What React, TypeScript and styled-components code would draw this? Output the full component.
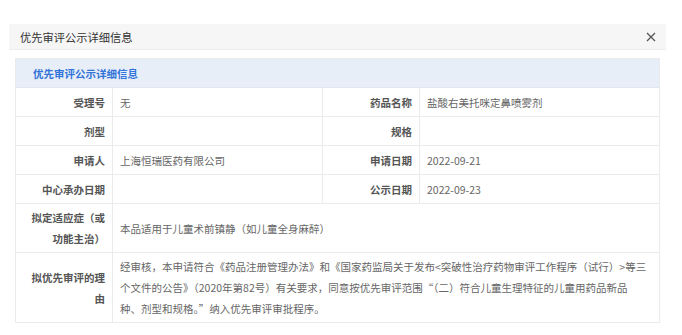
import React from 'react';
import styled, { createGlobalStyle } from 'styled-components';

const GlobalStyle = createGlobalStyle`
  html, body {
    margin: 0;
    padding: 0;
    background: #fff;
    font-family: "Noto Sans CJK SC", "Liberation Sans", sans-serif;
  }
`;

const Dialog = styled.div`
  width: 657px;
  margin: 24px 0 0 9px;
`;

const Header = styled.div`
  height: 26px;
  display: flex;
  align-items: center;
  justify-content: space-between;
  padding: 0 9px 0 11px;
  background: #f6f6f6;
  border-bottom: 1px solid #eeeeee;
  box-sizing: border-box;
`;

const HeaderTitle = styled.span`
  font-size: 11.25px;
  color: #333;
`;

const CloseButton = styled.button`
  width: 12px;
  height: 12px;
  padding: 0;
  border: none;
  background: none;
  display: flex;
  align-items: center;
  justify-content: center;
  cursor: pointer;
`;

const Body = styled.div`
  padding: 8px 7px 0 6px;
`;

const Table = styled.table`
  width: 644px;
  border-collapse: collapse;
  table-layout: fixed;
  font-size: 10.5px;
  line-height: 21px;
  border: 1px solid #ebebeb;
`;

const TitleCell = styled.th`
  height: 28px;
  padding: 0 0 0 17px;
  text-align: left;
  background: #e8eef8;
  color: #3274d9;
  font-weight: bold;
  border-bottom: 1px solid #e2e6ee;
`;

const Label = styled.td`
  padding: 3px 7px 3px 8px;
  text-align: right;
  vertical-align: middle;
  color: #555;
  font-weight: bold;
  border: 1px solid #ebebeb;
  height: 22px;
`;

const Value = styled.td<{ $wide?: boolean }>`
  padding: ${p => (p.$wide ? '3px 12px 3px 7px' : '3px 7px')};
  text-align: left;
  vertical-align: middle;
  color: #666;
  border: 1px solid #ebebeb;
`;

type Pair = [string, string];

const pairs: [Pair, Pair][] = [
  [['受理号', '无'], ['药品名称', '盐酸右美托咪定鼻喷雾剂']],
  [['剂型', ''], ['规格', '']],
  [['申请人', '上海恒瑞医药有限公司'], ['申请日期', '2022-09-21']],
  [['中心承办日期', ''], ['公示日期', '2022-09-23']],
];

const wide: Pair[] = [
  ['拟定适应症（或功能主治）', '本品适用于儿童术前镇静（如儿童全身麻醉）'],
  [
    '拟优先审评的理由',
    '经审核，本申请符合《药品注册管理办法》和《国家药监局关于发布<突破性治疗药物审评工作程序（试行）>等三个文件的公告》（2020年第82号）有关要求，同意按优先审评范围“（二）符合儿童生理特征的儿童用药品新品种、剂型和规格。”纳入优先审评审批程序。',
  ],
];

export default function App() {
  return (
    <>
      <GlobalStyle />
      <Dialog>
        <Header>
          <HeaderTitle>优先审评公示详细信息</HeaderTitle>
          <CloseButton aria-label="关闭">
            <svg width="10" height="10" viewBox="0 0 10 10">
              <path d="M1 1 L9 9 M9 1 L1 9" stroke="#555" strokeWidth="1.3" />
            </svg>
          </CloseButton>
        </Header>
        <Body>
          <Table>
            <colgroup>
              <col style={{ width: 97 }} />
              <col style={{ width: 210 }} />
              <col style={{ width: 97 }} />
              <col style={{ width: 240 }} />
            </colgroup>
            <thead>
              <tr>
                <TitleCell colSpan={4}>优先审评公示详细信息</TitleCell>
              </tr>
            </thead>
            <tbody>
              {pairs.map(([a, b]) => (
                <tr key={a[0]}>
                  <Label>{a[0]}</Label>
                  <Value>{a[1]}</Value>
                  <Label>{b[0]}</Label>
                  <Value>{b[1]}</Value>
                </tr>
              ))}
              {wide.map(([label, text]) => (
                <tr key={label}>
                  <Label>{label}</Label>
                  <Value $wide colSpan={3}>{text}</Value>
                </tr>
              ))}
            </tbody>
          </Table>
        </Body>
      </Dialog>
    </>
  );
}
